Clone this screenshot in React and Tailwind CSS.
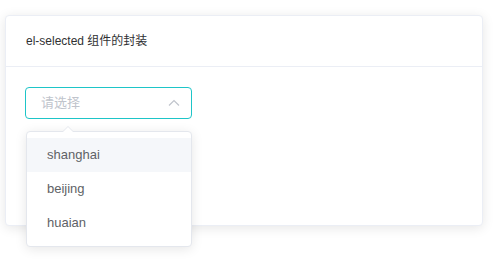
export default function App() {
  const items = ["shanghai", "beijing", "huaian"];
  return (
    <div className="w-[503px] h-[272px] bg-white pt-[15px] pl-[5px]" style={{ fontFamily: '"Liberation Sans", "Noto Sans CJK SC", sans-serif' }}>
      <div className="w-[478px] h-[211px] bg-white border border-[#ebeef5] rounded-[4px] shadow-[0_2px_12px_0_rgba(0,0,0,0.1)] overflow-visible">
        <div className="h-[51px] border-b border-[#ebeef5] px-[20px] flex items-center text-[12px] text-[#303133]">
          el-selected 组件的封装
        </div>
        <div className="px-[19px] pt-[20px] relative">
          <div className="w-[167px] h-[32px] border border-[#1ec5c8] rounded-[4px] flex items-center justify-between pl-[15px] pr-[10px]">
            <span className="text-[13px] text-[#c0c4cc]">请选择</span>
            <svg width="14" height="14" viewBox="0 0 14 14" fill="none">
              <path d="M2 9.5 L7 4.5 L12 9.5" stroke="#c0c4cc" strokeWidth="1.2" />
            </svg>
          </div>
          <div className="absolute left-[20px] top-[64px] w-[166px] bg-white border border-[#e4e7ed] rounded-[4px] shadow-[0_2px_12px_0_rgba(0,0,0,0.1)] py-[6px]">
            <div className="absolute -top-[6px] left-[35px] w-0 h-0 border-l-[6px] border-r-[6px] border-b-[6px] border-l-transparent border-r-transparent border-b-[#e4e7ed]"></div>
            <div className="absolute -top-[5px] left-[36px] w-0 h-0 border-l-[5px] border-r-[5px] border-b-[5px] border-l-transparent border-r-transparent border-b-white"></div>
            {items.map((it, i) => (
              <div key={it} className={`h-[34px] flex items-center px-[20px] text-[13px] text-[#606266] ${i === 0 ? "bg-[#f5f7fa]" : ""}`}>
                {it}
              </div>
            ))}
          </div>
        </div>
      </div>
    </div>
  );
}
